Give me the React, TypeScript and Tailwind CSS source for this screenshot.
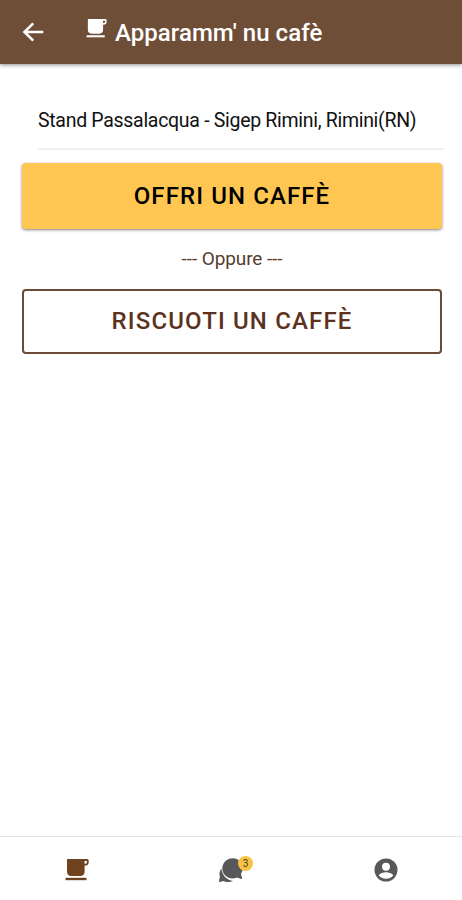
type IconProps = { className?: string }

function CupIcon({ className }: IconProps) {
  return (
    <svg viewBox="0 0 24 22" fill="currentColor" className={className}>
      <path fillRule="evenodd" d="M2 0h20a1.700 1.700 0 0 1 1.700 1.800v1.600c0 2-1.500 3.200-3.700 3.200h-.4v6.200c0 2.500-1.500 4.200-4.200 4.200H6.200C3.500 17 2 15.300 2 12.800zM19.600 1.900v2.800h.7c1 0 1.600-.6 1.600-1.500V1.900z" />
      <path d="M.5 18.800h21v2.400H.5z" />
    </svg>
  )
}

function BackIcon({ className }: IconProps) {
  return (
    <svg viewBox="0 0 22 20" fill="none" stroke="currentColor" strokeWidth="2.500" className={className}>
      <path d="M21.300 10H2.500M11.200 1.300 2.400 10l8.800 8.700" />
    </svg>
  )
}

function ChatIcon({ className }: IconProps) {
  return (
    <svg viewBox="0 0 26 26" fill="currentColor" className={className}>
      <path d="M3.300 11.600C1.500 14 1 17 1.900 19.600L1 24.300c-.1.500.2.700.7.600l3.900-1c3.200 1.600 6.600 1.500 9.500.1C9 23.500 4.200 18.600 3.300 11.600z" />
      <path d="M14.500 1.200a10.200 10.200 0 1 0 4.400 19.400l4.500 1.300c.5.100.8-.2.700-.7l-1.100-4.300A10.200 10.200 0 0 0 14.500 1.200z" />
    </svg>
  )
}

function PersonIcon({ className }: IconProps) {
  return (
    <svg viewBox="0 0 24 24" className={className}>
      <circle cx="12" cy="12" r="11.500" fill="currentColor" />
      <circle cx="12" cy="8.700" r="4" fill="#fff" />
      <path d="M4.600 17.300c1.500-2 4.500-3 7.400-3s5.900 1 7.400 3c-1.600 2.300-4.300 3.500-7.400 3.500s-5.800-1.200-7.400-3.500z" fill="#fff" />
    </svg>
  )
}

export default function App() {
  return (
    <div className="flex h-screen flex-col bg-white font-['Roboto',sans-serif]">
      <header className="flex h-16 shrink-0 items-center bg-[#6f4e37] pl-[22px] text-white shadow-[0_1px_4px_rgba(0,0,0,0.45)]">
        <BackIcon className="h-5 w-[22px]" />
        <CupIcon className="mb-[7px] ml-[42px] h-[19px] w-[21px]" />
        <h1 className="ml-2 pt-px text-[24px] leading-8 font-medium tracking-[0.05px] whitespace-nowrap">Apparamm' nu cafè</h1>
      </header>

      <main className="flex flex-1 flex-col pr-5 pl-[22px]">
        <div className="mt-[27px] -mr-0.5 ml-4 flex h-[59px] items-center border-b-2 border-[#f0f0f0] pt-[3px] text-[19.5px] tracking-[-0.3px] whitespace-nowrap text-[#111]">
          Stand Passalacqua - Sigep Rimini, Rimini(RN)
        </div>
        <button className="mt-[13px] h-[66px] shrink-0 rounded bg-[#ffc752] text-[24px] font-medium tracking-[1.1px] text-black shadow-[0_1px_3px_rgba(0,0,0,0.5)]">
          OFFRI UN CAFFÈ
        </button>
        <p className="my-4 h-7 text-center text-[19px] leading-7 tracking-[-0.1px] text-[#563d2c]">--- Oppure ---</p>
        <button className="h-[65px] shrink-0 rounded border-2 border-[#6b4a38] pb-0.5 text-[24px] font-medium tracking-[1.150px] text-[#5c321e]">
          RISCUOTI UN CAFFÈ
        </button>
      </main>

      <nav className="grid h-16 shrink-0 grid-cols-3 items-center justify-items-center border-t border-[#e5e5e5] text-[#58585a]">
        <CupIcon className="mt-[3px] h-[22px] w-6 text-[#6f4320]" />
        <div className="relative mt-0.5">
          <ChatIcon className="h-[26px] w-[26px]" />
          <span className="absolute -top-px left-5 flex h-[15px] w-[15px] items-center justify-center rounded-full bg-[#f8c244] pt-px text-[10px] text-[#4d4020]">
            3
          </span>
        </div>
        <PersonIcon className="mt-[3px] ml-0.5 h-6 w-6" />
      </nav>
    </div>
  )
}
